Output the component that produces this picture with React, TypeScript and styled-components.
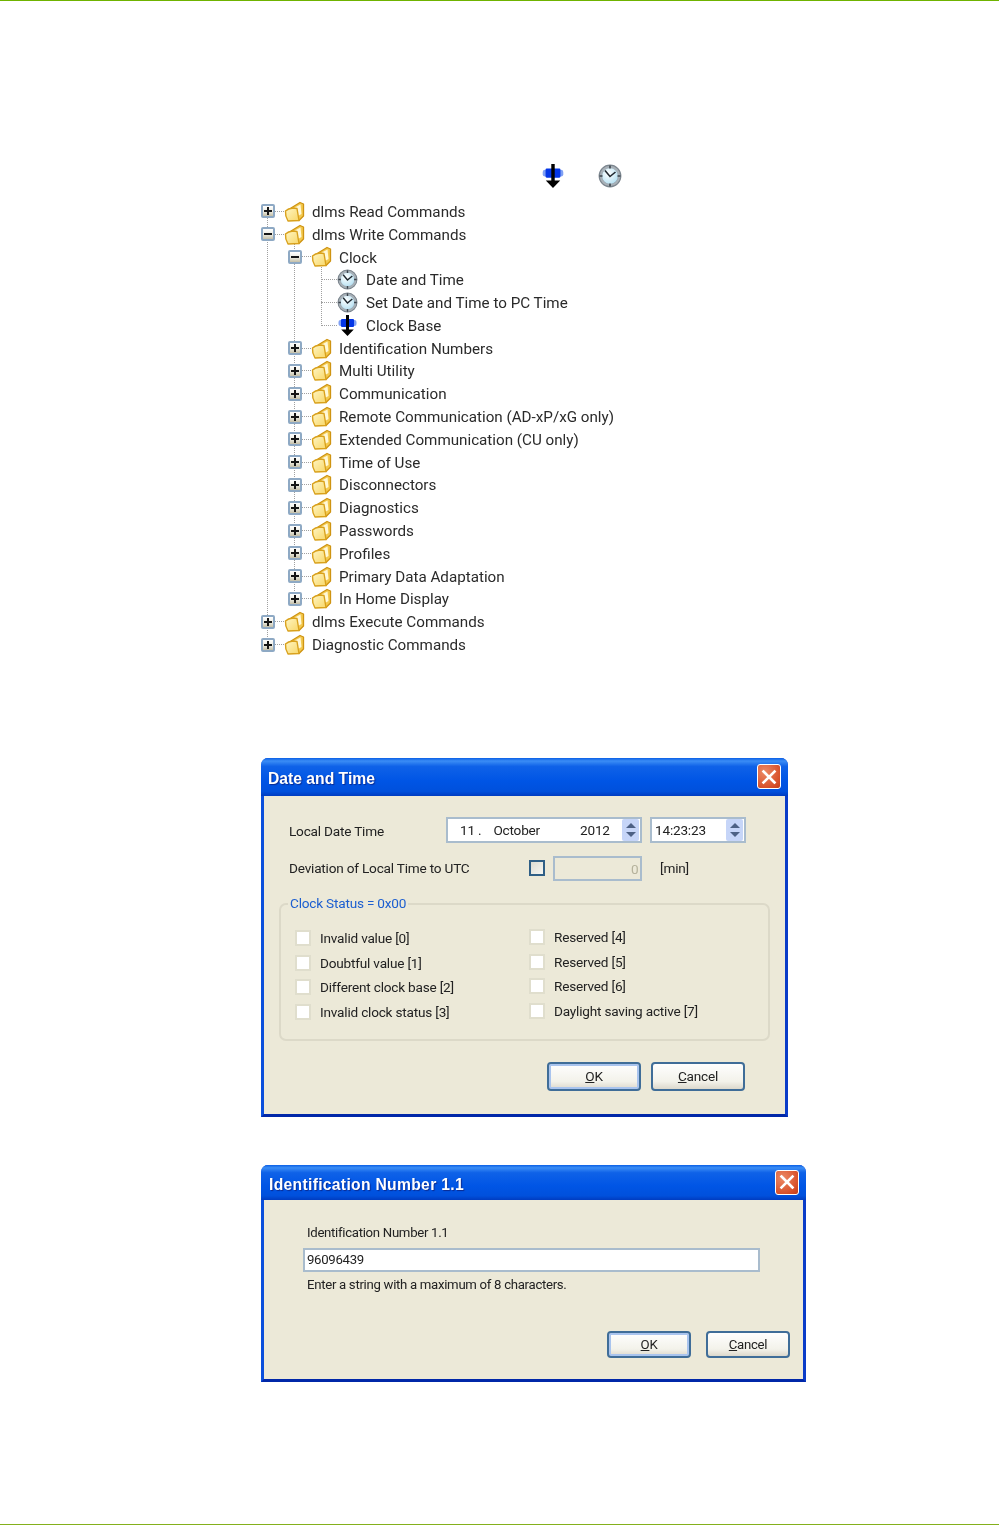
import { useId } from "react";
import styled, { createGlobalStyle } from "styled-components";

const GlobalStyle = createGlobalStyle`
  html, body { margin: 0; padding: 0; background: #fff; }
  body { font-family: Roboto, "Liberation Sans", Arial, sans-serif; color: #222; }
`;

const Page = styled.div`
  width: 999px;
  height: 1525px;
  box-sizing: border-box;
  border-top: 1px solid #6fb300;
  border-bottom: 1px solid #84b01c;
  padding-left: 261px;
  overflow: hidden;
`;

const IconStrip = styled.div`
  display: flex;
  align-items: center;
  height: 26px;
  margin-top: 162px;
  padding-left: 280px;
  gap: 33px;
  filter: blur(0.4px);
`;

const TreeList = styled.ul<{ $nested?: boolean }>`
  list-style: none;
  margin: ${({ $nested }) => ($nested ? "0 0 0 27px" : "11px 0 0 0")};
  padding: 0;
  position: relative;
  filter: ${({ $nested }) => ($nested ? "none" : "blur(0.4px)")};

  &::before {
    content: "";
    position: absolute;
    left: 6px;
    top: ${({ $nested }) => ($nested ? "-3px" : "11px")};
    bottom: 11px;
    border-left: 1px dotted #a0a0a0;
  }
`;

const TreeRow = styled.div`
  display: flex;
  align-items: center;
  height: 22.8px;
  position: relative;
`;

const ExpanderBox = styled.span`
  width: 14px;
  height: 14px;
  box-sizing: border-box;
  flex: none;
  margin-right: -1px;
  position: relative;
  z-index: 1;
  display: flex;
  align-items: center;
  justify-content: center;
  border: 2px solid #8ea9c4;
  border-radius: 2px;
  background: linear-gradient(#ffffff, #ecebe0 55%, #c4bfa8);
`;

const ExpanderBar = styled.span<{ $vertical?: boolean }>`
  position: absolute;
  background: #151515;
  width: ${({ $vertical }) => ($vertical ? "2px" : "8px")};
  height: ${({ $vertical }) => ($vertical ? "8px" : "2px")};
`;

const Connector = styled.span<{ $width: number; $indent?: number }>`
  flex: none;
  width: ${({ $width }) => $width}px;
  margin-left: ${({ $indent }) => $indent ?? 0}px;
  border-top: 1px dotted #a0a0a0;
`;

const TreeLabel = styled.span<{ $leaf?: boolean }>`
  margin-left: ${({ $leaf }) => ($leaf ? 8 : 7)}px;
  padding-top: 1px;
  font-size: 15.2px;
  line-height: 22px;
  white-space: nowrap;
  color: #2a2a2a;
`;

const TreeIcon = styled.span`
  flex: none;
  display: flex;
  width: 21px;
  height: 21px;
  position: relative;
  z-index: 1;
`;

const Dialog = styled.section<{ $width: number; $top: number }>`
  width: ${({ $width }) => $width}px;
  margin-top: ${({ $top }) => $top}px;
  box-sizing: border-box;
  border-radius: 7px 7px 0 0;
  background: #0a4fdc;
  border-right: 3px solid #0a3cc8;
  border-bottom: 3px solid #0027a8;
  border-left: 3px solid #0a4fdc;
  filter: blur(0.4px);
`;

const TitleBar = styled.header<{ $height: number }>`
  height: ${({ $height }) => $height}px;
  margin: 0 -3px;
  padding: 0 7px;
  display: flex;
  align-items: center;
  justify-content: space-between;
  border-radius: 7px 7px 0 0;
  background: linear-gradient(#0a5fe6 0, #3b8df5 8%, #0f62e8 22%, #0055e5 60%, #0050dc 88%, #003cc0 100%);
`;

const TitleText = styled.h2<{ $spacing?: number; $left?: number }>`
  margin: 5px 0 0 ${({ $left }) => $left ?? 0}px;
  font-family: "Liberation Sans", Arial, sans-serif;
  font-size: 15.7px;
  font-weight: 700;
  color: #fff;
  letter-spacing: ${({ $spacing }) => $spacing ?? 0}px;
  text-shadow: 1px 1px 1px #0a2a90;
`;

const CloseButton = styled.span`
  width: 24px;
  height: 25px;
  box-sizing: border-box;
  display: flex;
  align-items: center;
  justify-content: center;
  border: 1px solid #fff;
  border-radius: 3px;
  background: radial-gradient(circle at 30% 30%, #ec8a66, #d8512b 70%, #c23c18);
`;

const DialogBody = styled.div<{ $padding: string; $fontSize: number; $spacing: number }>`
  background: #ece9d8;
  padding: ${({ $padding }) => $padding};
  font-size: ${({ $fontSize }) => $fontSize}px;
  letter-spacing: ${({ $spacing }) => $spacing}px;
`;

const FormRow = styled.div<{ $top?: number }>`
  display: flex;
  align-items: center;
  margin: ${({ $top }) => $top ?? 0}px 0 0 10px;
`;

const RowLabel = styled.span<{ $width: number; $nudge?: number }>`
  flex: none;
  width: ${({ $width }) => $width}px;
  padding-top: ${({ $nudge }) => $nudge ?? 0}px;
  white-space: nowrap;
`;

const Field = styled.div<{ $width: number; $height?: number; $disabled?: boolean; $left?: number }>`
  flex: none;
  width: ${({ $width }) => $width}px;
  height: ${({ $height }) => $height ?? 26}px;
  margin-left: ${({ $left }) => $left ?? 0}px;
  box-sizing: border-box;
  display: flex;
  align-items: center;
  border: 2px solid #a9bccd;
  background: ${({ $disabled }) => ($disabled ? "#ece9d8" : "#fff")};
  color: ${({ $disabled }) => ($disabled ? "#b5b29c" : "#222")};
`;

const FieldPart = styled.span<{ $left: number }>`
  margin-left: ${({ $left }) => $left}px;
  padding-top: 1px;
  white-space: nowrap;
`;

const Spinner = styled.span`
  margin-left: auto;
  margin-right: 1px;
  width: 17px;
  height: 22px;
  border-radius: 2px;
  background: #c6d5f8;
  display: flex;
  flex-direction: column;
  align-items: center;
  justify-content: space-evenly;
`;

const SpinArrow = styled.span<{ $down?: boolean }>`
  width: 0;
  height: 0;
  border-left: 5px solid transparent;
  border-right: 5px solid transparent;
  border-bottom: ${({ $down }) => ($down ? "0" : "5px solid #4d6185")};
  border-top: ${({ $down }) => ($down ? "5px solid #4d6185" : "0")};
`;

const DeviationCheck = styled.span`
  flex: none;
  width: 16px;
  height: 16px;
  box-sizing: border-box;
  margin-right: 8px;
  border: 2px solid #2f5f86;
  background: linear-gradient(135deg, #dcdcd2, #f6f6f2);
`;

const MinUnit = styled.span`
  margin-left: 18px;
`;

const GroupBox = styled.div`
  position: relative;
  height: 138px;
  margin-top: 22px;
  box-sizing: border-box;
  border: 2px solid #dcd9c8;
  border-radius: 7px;
  padding: 21px 0 0 14px;
  display: grid;
  grid-template-columns: 234px 1fr;
  grid-auto-rows: 24.6px;
`;

const GroupLegend = styled.span`
  position: absolute;
  left: 7px;
  top: -11px;
  padding: 0 2px;
  background: #ece9d8;
  color: #1d5fd0;
  line-height: 18px;
`;

const StatusColumn = styled.div<{ $lift?: boolean }>`
  display: flex;
  flex-direction: column;
  margin-top: ${({ $lift }) => ($lift ? -1 : 0)}px;
  grid-row: 1 / span 4;
`;

const StatusRow = styled.div`
  display: flex;
  align-items: center;
  height: 24.6px;
  white-space: nowrap;
`;

const StatusBox = styled.span`
  flex: none;
  width: 16px;
  height: 16px;
  box-sizing: border-box;
  margin-right: 9px;
  border: 2px solid #e0decd;
  background: #fff;
`;

const ButtonRow = styled.div<{ $top: number; $right: number; $gap: number }>`
  display: flex;
  justify-content: flex-end;
  gap: ${({ $gap }) => $gap}px;
  margin-top: ${({ $top }) => $top}px;
  margin-right: ${({ $right }) => $right}px;
`;

const XpButton = styled.div<{ $width: number; $height: number; $primary?: boolean }>`
  width: ${({ $width }) => $width}px;
  height: ${({ $height }) => $height}px;
  box-sizing: border-box;
  display: flex;
  align-items: center;
  justify-content: center;
  border: 2px solid #3f6d98;
  border-radius: 4px;
  background: linear-gradient(#fefefe, #f3f2ea 70%, #dcd8cc);
  box-shadow: ${({ $primary }) => ($primary ? "inset 0 0 0 2px #a9c4ee" : "none")};
`;

const AccessKey = styled.span`
  text-decoration: underline;
`;

const IdLabel = styled.div`
  margin-left: 43px;
  line-height: 18px;
`;

const IdField = styled(Field)`
  margin: 6px 0 0 39px;
  padding-left: 2px;
`;

const IdHint = styled(IdLabel)`
  margin-top: 4px;
`;

function FolderIcon() {
  const id = useId();
  return (
    <svg width="21" height="21" viewBox="0 0 21 21">
      <defs>
        <linearGradient id={id} x1="0" y1="0" x2="1" y2="1">
          <stop offset="0" stopColor="#fff6c4" />
          <stop offset="1" stopColor="#f8d768" />
        </linearGradient>
      </defs>
      <path d="M7 7 L16 1.5 L19.5 3 L19.5 15 L15 19.5 Z" fill="#f3c94e" stroke="#cf9412" strokeWidth="1.3" strokeLinejoin="round" />
      <path d="M10 7 L16.5 3.5 L17.5 13 L14 15 Z" fill="#fff8d8" />
      <path d="M1.5 10 Q4 7.5 9 7 L13 7.5 L15 19.5 L4 20 Q1 15 1.5 10 Z" fill={`url(#${id})`} stroke="#d9a11c" strokeWidth="1.4" strokeLinejoin="round" />
    </svg>
  );
}

function ClockIcon({ size = 21 }: { size?: number }) {
  const id = useId();
  return (
    <svg width={size} height={size} viewBox="0 0 24 24">
      <defs>
        <radialGradient id={id} cx="0.4" cy="0.35" r="0.7">
          <stop offset="0" stopColor="#ffffff" />
          <stop offset="1" stopColor="#b4e0f2" />
        </radialGradient>
      </defs>
      <circle cx="12" cy="12" r="10.8" fill="#aab2b8" stroke="#7b858e" strokeWidth="1.2" />
      <circle cx="12" cy="12" r="8.2" fill={`url(#${id})`} stroke="#8f9ba6" strokeWidth="0.6" />
      <path d="M12 1.5v3M12 19.5v3M1.5 12h3M19.5 12h3" stroke="#3c454d" strokeWidth="1.6" />
      <path d="M7 6.5L12 12.5L17.5 8" fill="none" stroke="#1e262d" strokeWidth="1.6" />
    </svg>
  );
}

function ArrowIcon({ size = 21 }: { size?: number }) {
  return (
    <svg width={size} height={size} viewBox="0 0 21 21">
      <rect x="1.5" y="5" width="18" height="6" rx="2" fill="#7fa0f4" />
      <rect x="4" y="4" width="13" height="8" rx="1" fill="#0436e6" />
      <path d="M9 0h3v14.5h4.8L10.5 21L4.2 14.5H9z" fill="#000" />
    </svg>
  );
}

function CloseIcon() {
  return (
    <svg width="16" height="16" viewBox="0 0 16 16">
      <path d="M2.5 2.5L13.5 13.5M13.5 2.5L2.5 13.5" stroke="#fff" strokeWidth="2.6" strokeLinecap="square" />
    </svg>
  );
}

function Expander({ open }: { open?: boolean }) {
  return (
    <ExpanderBox>
      <ExpanderBar />
      {!open && <ExpanderBar $vertical />}
    </ExpanderBox>
  );
}

function FolderRow({ label, open }: { label: string; open?: boolean }) {
  return (
    <TreeRow>
      <Expander open={open} />
      <Connector $width={10} />
      <TreeIcon>
        <FolderIcon />
      </TreeIcon>
      <TreeLabel>{label}</TreeLabel>
    </TreeRow>
  );
}

function LeafRow({ label, arrow }: { label: string; arrow?: boolean }) {
  return (
    <TreeRow>
      <Connector $width={16} $indent={6} />
      <TreeIcon>{arrow ? <ArrowIcon /> : <ClockIcon />}</TreeIcon>
      <TreeLabel $leaf>{label}</TreeLabel>
    </TreeRow>
  );
}

const writeGroups = [
  "Identification Numbers",
  "Multi Utility",
  "Communication",
  "Remote Communication (AD-xP/xG only)",
  "Extended Communication (CU only)",
  "Time of Use",
  "Disconnectors",
  "Diagnostics",
  "Passwords",
  "Profiles",
  "Primary Data Adaptation",
  "In Home Display",
];

const statusLeft = ["Invalid value [0]", "Doubtful value [1]", "Different clock base [2]", "Invalid clock status [3]"];
const statusRight = ["Reserved [4]", "Reserved [5]", "Reserved [6]", "Daylight saving active [7]"];

function CommandTree() {
  return (
    <TreeList>
      <li>
        <FolderRow label="dlms Read Commands" />
      </li>
      <li>
        <FolderRow label="dlms Write Commands" open />
        <TreeList $nested>
          <li>
            <FolderRow label="Clock" open />
            <TreeList $nested>
              <li>
                <LeafRow label="Date and Time" />
              </li>
              <li>
                <LeafRow label="Set Date and Time to PC Time" />
              </li>
              <li>
                <LeafRow label="Clock Base" arrow />
              </li>
            </TreeList>
          </li>
          {writeGroups.map((name) => (
            <li key={name}>
              <FolderRow label={name} />
            </li>
          ))}
        </TreeList>
      </li>
      <li>
        <FolderRow label="dlms Execute Commands" />
      </li>
      <li>
        <FolderRow label="Diagnostic Commands" />
      </li>
    </TreeList>
  );
}

function SpinButtons() {
  return (
    <Spinner>
      <SpinArrow />
      <SpinArrow $down />
    </Spinner>
  );
}

function DateTimeDialog() {
  return (
    <Dialog $width={527} $top={102}>
      <TitleBar $height={38}>
        <TitleText>Date and Time</TitleText>
        <CloseButton>
          <CloseIcon />
        </CloseButton>
      </TitleBar>
      <DialogBody $padding="21px 15px 23px" $fontSize={13.6} $spacing={-0.2}>
        <FormRow>
          <RowLabel $width={157} $nudge={2}>
            Local Date Time
          </RowLabel>
          <Field $width={196}>
            <FieldPart $left={12}>11 .</FieldPart>
            <FieldPart $left={12}>October</FieldPart>
            <FieldPart $left={40}>2012</FieldPart>
            <SpinButtons />
          </Field>
          <Field $width={96} $left={8}>
            <FieldPart $left={3}>14:23:23</FieldPart>
            <SpinButtons />
          </Field>
        </FormRow>
        <FormRow $top={13}>
          <RowLabel $width={240}>Deviation of Local Time to UTC</RowLabel>
          <DeviationCheck />
          <Field $width={89} $height={25} $disabled>
            <FieldPart $left={76}>0</FieldPart>
          </Field>
          <MinUnit>[min]</MinUnit>
        </FormRow>
        <GroupBox>
          <GroupLegend>Clock Status = 0x00</GroupLegend>
          <StatusColumn>
            {statusLeft.map((s) => (
              <StatusRow key={s}>
                <StatusBox />
                {s}
              </StatusRow>
            ))}
          </StatusColumn>
          <StatusColumn $lift>
            {statusRight.map((s) => (
              <StatusRow key={s}>
                <StatusBox />
                {s}
              </StatusRow>
            ))}
          </StatusColumn>
        </GroupBox>
        <ButtonRow $top={21} $right={25} $gap={10}>
          <XpButton $width={94} $height={29} $primary>
            <span>
              <AccessKey>O</AccessKey>K
            </span>
          </XpButton>
          <XpButton $width={94} $height={29}>
            <span>
              <AccessKey>C</AccessKey>ancel
            </span>
          </XpButton>
        </ButtonRow>
      </DialogBody>
    </Dialog>
  );
}

function IdentificationDialog() {
  return (
    <Dialog $width={545} $top={48}>
      <TitleBar $height={35}>
        <TitleText $spacing={0.3} $left={1}>
          Identification Number 1.1
        </TitleText>
        <CloseButton>
          <CloseIcon />
        </CloseButton>
      </TitleBar>
      <DialogBody $padding="24px 0 21px" $fontSize={13.2} $spacing={-0.3}>
        <IdLabel>Identification Number 1.1</IdLabel>
        <IdField $width={457} $height={24}>
          96096439
        </IdField>
        <IdHint>Enter a string with a maximum of 8 characters.</IdHint>
        <ButtonRow $top={37} $right={13} $gap={15}>
          <XpButton $width={84} $height={27} $primary>
            <span>
              <AccessKey>O</AccessKey>K
            </span>
          </XpButton>
          <XpButton $width={84} $height={27}>
            <span>
              <AccessKey>C</AccessKey>ancel
            </span>
          </XpButton>
        </ButtonRow>
      </DialogBody>
    </Dialog>
  );
}

export default function App() {
  return (
    <Page>
      <GlobalStyle />
      <IconStrip>
        <ArrowIcon size={24} />
        <ClockIcon size={24} />
      </IconStrip>
      <CommandTree />
      <DateTimeDialog />
      <IdentificationDialog />
    </Page>
  );
}
